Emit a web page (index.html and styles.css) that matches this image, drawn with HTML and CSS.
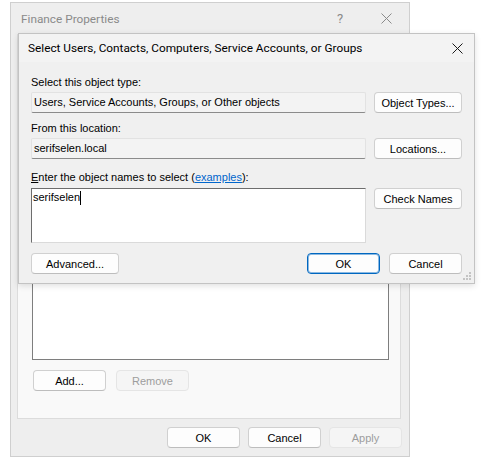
FILE: index.html
```html
<!DOCTYPE html>
<html>
<head>
<meta charset="utf-8">
<link rel="stylesheet" href="styles.css">
</head>
<body>
<div class="desktop">
  <div class="win back">
    <div class="titlebar back-title">
      <span class="title-text">Finance Properties</span>
      <span class="tb-help">?</span>
      <span class="tb-close">
        <svg width="11" height="11" viewBox="0 0 11 11"><path d="M0.5 0.5 L10.5 10.5 M10.5 0.5 L0.5 10.5" stroke="#8a8a8a" stroke-width="1" fill="none"/></svg>
      </span>
    </div>
    <div class="panel">
      <div class="listbox"></div>
      <div class="panel-buttons">
        <button class="btn">Add...</button>
        <button class="btn disabled">Remove</button>
      </div>
    </div>
    <div class="footer">
      <button class="btn">OK</button>
      <button class="btn">Cancel</button>
      <button class="btn disabled">Apply</button>
    </div>
  </div>

  <div class="win dialog">
    <div class="titlebar dlg-title">
      <span class="title-text">Select Users, Contacts, Computers, Service Accounts, or Groups</span>
      <span class="dlg-close">
        <svg width="11" height="11" viewBox="0 0 11 11"><path d="M0.5 0.5 L10.5 10.5 M10.5 0.5 L0.5 10.5" stroke="#1a1a1a" stroke-width="1" fill="none"/></svg>
      </span>
    </div>
    <div class="dlg-body">
      <div class="label l1">Select this object type:</div>
      <div class="row r1">
        <div class="field">Users, Service Accounts, Groups, or Other objects</div>
        <button class="btn side">Object Types...</button>
      </div>
      <div class="label l2">From this location:</div>
      <div class="row r2">
        <div class="field">serifselen.local</div>
        <button class="btn side">Locations...</button>
      </div>
      <div class="label l3"><u>E</u>nter the object names to select (<a class="link" href="#">examples</a>):</div>
      <div class="row r3">
        <div class="textarea"><span>serifselen</span><span class="caret"></span></div>
        <button class="btn side">Check Names</button>
      </div>
      <div class="row r4">
        <button class="btn wide">Advanced...</button>
        <div class="spacer"></div>
        <button class="btn primary">OK</button>
        <button class="btn">Cancel</button>
      </div>
    </div>
    <svg class="grip" width="8" height="8" viewBox="0 0 8 8">
      <rect x="6" y="0" width="2" height="2" fill="#c4c4c4"/>
      <rect x="3" y="3" width="2" height="2" fill="#c4c4c4"/>
      <rect x="6" y="3" width="2" height="2" fill="#c4c4c4"/>
      <rect x="0" y="6" width="2" height="2" fill="#c4c4c4"/>
      <rect x="3" y="6" width="2" height="2" fill="#c4c4c4"/>
      <rect x="6" y="6" width="2" height="2" fill="#c4c4c4"/>
    </svg>
  </div>
</div>
</body>
</html>
```

FILE: styles.css
```css
html, body {
  margin: 0;
  padding: 0;
  background: #ffffff;
}
.desktop {
  position: relative;
  width: 485px;
  height: 463px;
  overflow: hidden;
  font-family: "Liberation Sans", Arial, sans-serif;
  font-size: 11px;
  color: #000;
}
.win {
  position: absolute;
  box-sizing: border-box;
  display: flex;
  flex-direction: column;
}
.back {
  left: 10px;
  top: 2px;
  width: 400px;
  height: 455px;
  border: 1px solid #cfcfcf;
  background: #eeeeee;
}
.titlebar {
  display: flex;
  align-items: center;
  flex: none;
}
.title-text {
  font-family: Roboto, "Noto Sans", sans-serif;
  font-size: 11.8px;
  flex: 1;
  white-space: nowrap;
}
.back-title {
  height: 31px;
  padding-left: 10px;
  color: #8a8a8a;
}
.tb-help {
  font-family: Roboto, "Noto Sans", sans-serif;
  font-size: 13px;
  color: #8a8a8a;
  width: 46px;
  text-align: center;
}
.tb-close {
  width: 46px;
  display: flex;
  justify-content: center;
}
.panel {
  flex: 1;
  margin: 0 8px 0 6px;
  background: #f9f9f9;
  border: 1px solid #dcdcdc;
  display: flex;
  flex-direction: column;
  padding: 0 11px 27px 14px;
}
.listbox {
  flex: 1;
  background: #ffffff;
  border: 1px solid #7e7e7e;
  border-top-color: #6e6e6e;
}
.panel-buttons {
  display: flex;
  gap: 10px;
  margin-top: 10px;
  padding-left: 1px;
}
.footer {
  flex: none;
  display: flex;
  justify-content: flex-end;
  gap: 8px;
  padding: 8px 7px 8px 0;
}
.btn {
  box-sizing: border-box;
  width: 73px;
  height: 21px;
  padding: 0;
  background: #fdfdfd;
  border: 1px solid #d0d0d0;
  border-bottom-color: #bdbdbd;
  border-radius: 4px;
  font-family: "Liberation Sans", Arial, sans-serif;
  font-size: 11px;
  color: #000;
}
.btn.disabled {
  background: #f5f5f5;
  border-color: #e5e5e5;
  color: #9d9d9d;
}
.btn.side {
  width: 88px;
  margin-left: 8px;
  flex: none;
}
.btn.wide {
  width: 88px;
}
.btn.primary {
  border: 1px solid #0067c0;
  box-shadow: inset 0 0 0 1px rgba(0, 103, 192, 0.45);
}

/* Front dialog */
.dialog {
  left: 18px;
  top: 33px;
  width: 457px;
  height: 251px;
  border: 1px solid #c3c3c3;
  background: #f0f0f0;
  box-shadow: 0 2px 6px rgba(0, 0, 0, 0.12);
}
.dlg-title {
  height: 28px;
  padding-left: 9px;
  background: #f3f3f3;
  color: #000;
}
.dlg-close {
  width: 30px;
  display: flex;
  justify-content: center;
  margin-right: 2px;
}
.dlg-body {
  padding: 13px 12px 0 12px;
  display: flex;
  flex-direction: column;
}
.label {
  height: 15px;
  line-height: 15px;
  white-space: nowrap;
}
.l2 { margin-top: 8px; }
.l3 { margin-top: 11px; }
.row {
  display: flex;
  align-items: flex-start;
}
.r1, .r2 { margin-top: 2px; }
.r3 { margin-top: 3px; }
.r4 { margin-top: 10px; gap: 9px; }
.spacer { flex: 1; }
.field {
  box-sizing: border-box;
  width: 336px;
  height: 21px;
  line-height: 19px;
  padding-left: 2px;
  background: #f3f3f3;
  border: 1px solid #e2e2e2;
  border-bottom-color: #8b8b8b;
  border-radius: 2px;
  white-space: nowrap;
  overflow: hidden;
}
.textarea {
  box-sizing: border-box;
  width: 336px;
  height: 55px;
  background: #ffffff;
  border: 1px solid #dadada;
  border-top-color: #6d6d6d;
  border-left-color: #6d6d6d;
  padding: 1px 0 0 1px;
  line-height: 15px;
  display: flex;
  align-items: flex-start;
}
.caret {
  display: inline-block;
  width: 1px;
  height: 14px;
  background: #000;
  margin-top: 1px;
}
.link {
  color: #0066cc;
  text-decoration: underline;
}
.grip {
  position: absolute;
  right: 3px;
  bottom: 3px;
}
```
